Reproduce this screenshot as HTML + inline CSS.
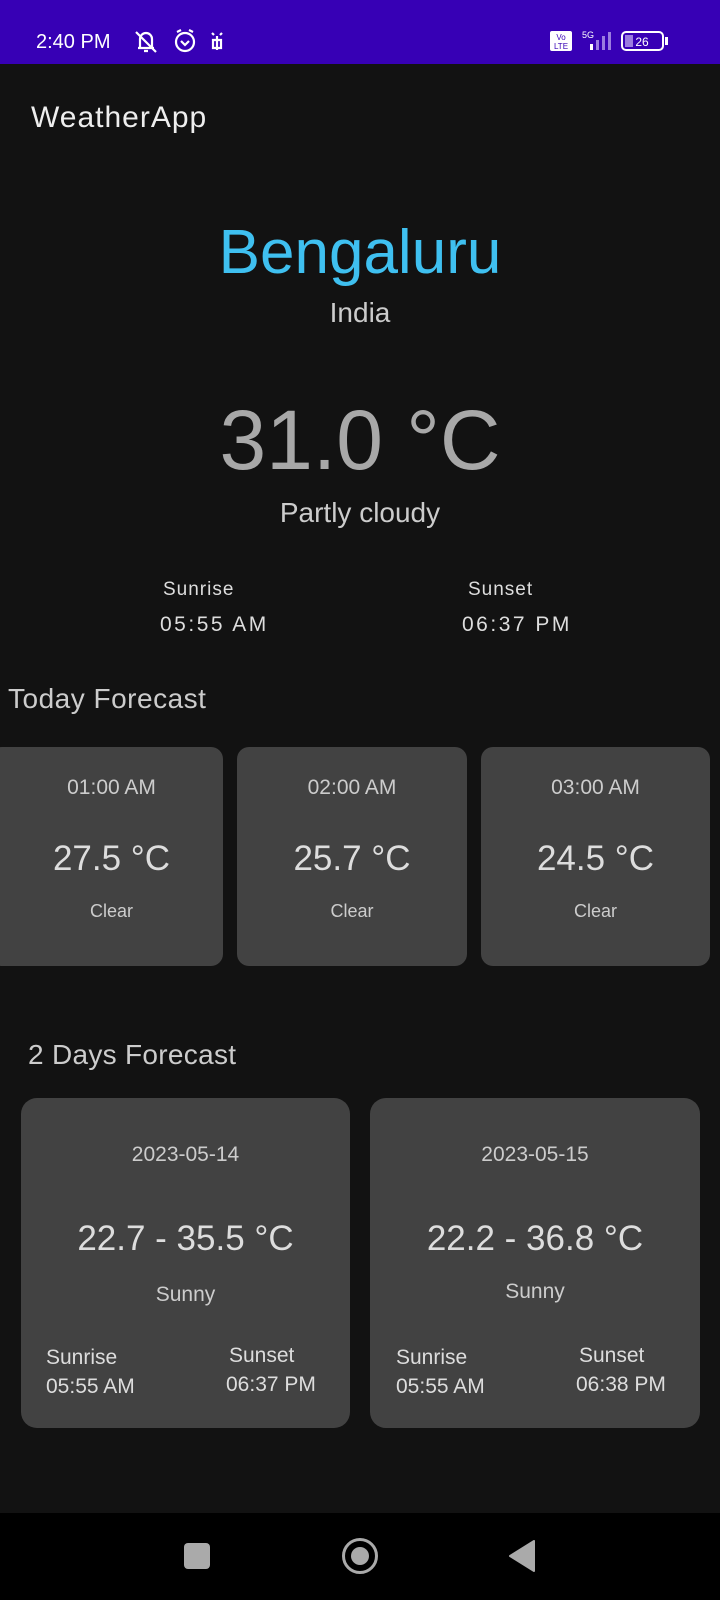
<!DOCTYPE html>
<html><head><meta charset="utf-8"><style>
*{margin:0;padding:0;box-sizing:border-box}
body{width:720px;height:1600px;background:#121212;position:relative;overflow:hidden;font-family:"Liberation Sans",sans-serif;color:#ddd}
.t{position:absolute;white-space:nowrap;line-height:1}
.c{text-align:center}
.n{font-family:"Liberation Sans",sans-serif}
.card{position:absolute;background:#424242;border-radius:12px}
</style></head><body>
<div style="position:absolute;left:0;top:0;width:720px;height:64px;background:#3700b5"></div>
<div class="t" style="left:36px;top:32px;font-size:20px;color:#fff">2:40 PM</div>
<svg style="position:absolute;left:132px;top:28px" width="100" height="28" viewBox="0 0 100 28" fill="none" stroke="#fff" stroke-width="2.2">
<path d="M8 20 V11 a6 6 0 0 1 12 0 V20 Z M6 20 H22 M12 23 H16 M4 4 L24 24"/>
<circle cx="53" cy="14" r="9"/><path d="M45 4 L49 2 M61 4 L57 2 M49 13 L53 17 L57 13"/>
<path d="M85 8 V22 M81 12 H89 V20 H81 Z M80 5 L82 7 M90 5 L88 7"/>
</svg>
<svg style="position:absolute;left:550px;top:28px" width="130" height="26" viewBox="0 0 130 26">
<rect x="0" y="3" width="22" height="20" rx="2" fill="#fff"/><text x="11" y="12" font-size="8" text-anchor="middle" fill="#3700b5" font-family="Liberation Sans">Vo</text><text x="11" y="21" font-size="8" text-anchor="middle" fill="#3700b5" font-family="Liberation Sans">LTE</text>
<text x="32" y="10" font-size="9" fill="#fff" font-family="Liberation Sans">5G</text>
<rect x="40" y="16" width="3" height="6" fill="#fff"/><rect x="46" y="12" width="3" height="10" fill="#9b7ce0"/><rect x="52" y="8" width="3" height="14" fill="#9b7ce0"/><rect x="58" y="4" width="3" height="18" fill="#9b7ce0"/>
<rect x="72" y="4" width="41" height="18" rx="4" fill="none" stroke="#fff" stroke-width="2"/><rect x="75" y="7" width="8" height="12" fill="#9b7ce0"/><text x="92" y="18" font-size="12" text-anchor="middle" fill="#fff" font-family="Liberation Sans">26</text><rect x="115" y="9" width="3" height="8" fill="#fff"/>
</svg>

<div class="t" style="left:31px;top:103px;font-size:30px;color:#eee;letter-spacing:1px">WeatherApp</div>
<div class="t c" style="left:0;width:720px;top:222px;font-size:62px;color:#3fc0f0">Bengaluru</div>
<div class="t c" style="left:0;width:720px;top:299px;font-size:28px;color:#ccc">India</div>
<div class="t c" style="left:0;width:720px;top:398px;font-size:84px;color:#a8a8a8;font-weight:300">31.0 °C</div>
<div class="t c" style="left:0;width:720px;top:499px;font-size:28px;color:#ccc">Partly cloudy</div>
<div class="t" style="left:163px;top:580px;font-size:19px;color:#ddd;letter-spacing:1px">Sunrise</div>
<div class="t" style="left:160px;top:614px;font-size:21px;color:#ddd;letter-spacing:2.5px">05:55 AM</div>
<div class="t" style="left:468px;top:580px;font-size:19px;color:#ddd;letter-spacing:1px">Sunset</div>
<div class="t" style="left:462px;top:614px;font-size:21px;color:#ddd;letter-spacing:2.5px">06:37 PM</div>

<div class="t n" style="left:8px;top:685px;font-size:28px;color:#ccc;letter-spacing:0.5px">Today Forecast</div>

<div class="card" style="left:-10px;top:747px;width:233px;height:219px"></div>
<div class="card" style="left:237px;top:747px;width:230px;height:219px"></div>
<div class="card" style="left:481px;top:747px;width:229px;height:219px"></div>
<div class="t c n" style="left:0;width:223px;top:777px;font-size:21px;color:#ccc">01:00 AM</div>
<div class="t c n" style="left:237px;width:230px;top:777px;font-size:21px;color:#ccc">02:00 AM</div>
<div class="t c n" style="left:481px;width:229px;top:777px;font-size:21px;color:#ccc">03:00 AM</div>
<div class="t c n" style="left:0;width:223px;top:841px;font-size:35px;color:#ddd">27.5 °C</div>
<div class="t c n" style="left:237px;width:230px;top:841px;font-size:35px;color:#ddd">25.7 °C</div>
<div class="t c n" style="left:481px;width:229px;top:841px;font-size:35px;color:#ddd">24.5 °C</div>
<div class="t c n" style="left:0;width:223px;top:902px;font-size:18px;color:#ccc">Clear</div>
<div class="t c n" style="left:237px;width:230px;top:902px;font-size:18px;color:#ccc">Clear</div>
<div class="t c n" style="left:481px;width:229px;top:902px;font-size:18px;color:#ccc">Clear</div>

<div class="t n" style="left:28px;top:1041px;font-size:28px;color:#ccc;letter-spacing:0.3px">2 Days Forecast</div>

<div class="card" style="left:21px;top:1098px;width:329px;height:330px;border-radius:16px"></div>
<div class="card" style="left:370px;top:1098px;width:330px;height:330px;border-radius:16px"></div>
<div class="t c n" style="left:21px;width:329px;top:1144px;font-size:21px;color:#ccc">2023-05-14</div>
<div class="t c n" style="left:370px;width:330px;top:1144px;font-size:21px;color:#ccc">2023-05-15</div>
<div class="t c n" style="left:21px;width:329px;top:1221px;font-size:35px;color:#ddd">22.7 - 35.5 °C</div>
<div class="t c n" style="left:370px;width:330px;top:1221px;font-size:35px;color:#ddd">22.2 - 36.8 °C</div>
<div class="t c n" style="left:21px;width:329px;top:1284px;font-size:21px;color:#ccc">Sunny</div>
<div class="t c n" style="left:370px;width:330px;top:1281px;font-size:21px;color:#ccc">Sunny</div>
<div class="t n" style="left:46px;top:1347px;font-size:21px;color:#ddd">Sunrise</div>
<div class="t n" style="left:46px;top:1376px;font-size:21px;color:#ddd">05:55 AM</div>
<div class="t n" style="left:229px;top:1345px;font-size:21px;color:#ddd">Sunset</div>
<div class="t n" style="left:226px;top:1374px;font-size:21px;color:#ddd">06:37 PM</div>
<div class="t n" style="left:396px;top:1347px;font-size:21px;color:#ddd">Sunrise</div>
<div class="t n" style="left:396px;top:1376px;font-size:21px;color:#ddd">05:55 AM</div>
<div class="t n" style="left:579px;top:1345px;font-size:21px;color:#ddd">Sunset</div>
<div class="t n" style="left:576px;top:1374px;font-size:21px;color:#ddd">06:38 PM</div>

<div style="position:absolute;left:0;top:1513px;width:720px;height:87px;background:#000"></div>
<div style="position:absolute;left:184px;top:1543px;width:26px;height:26px;background:#aaa;border-radius:4px"></div>
<div style="position:absolute;left:342px;top:1538px;width:36px;height:36px;border:3px solid #aaa;border-radius:50%"></div>
<div style="position:absolute;left:351px;top:1547px;width:18px;height:18px;background:#aaa;border-radius:50%"></div>
<svg style="position:absolute;left:508px;top:1540px" width="28" height="32"><path d="M26 1 V31 L2 16 Z" fill="#aaa" stroke="#aaa" stroke-linejoin="round" stroke-width="2"/></svg>
</body></html>
